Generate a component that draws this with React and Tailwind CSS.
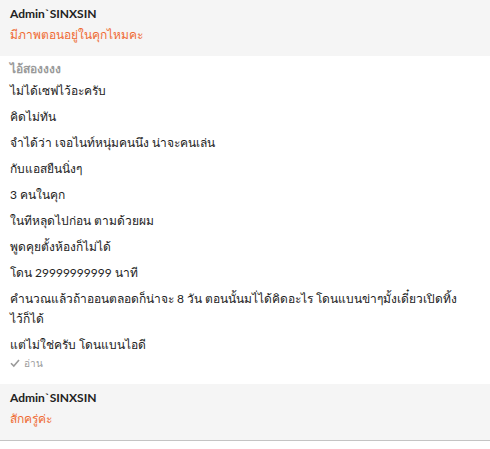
import React from "react";

const lines = [
  "ไม่ได้เซฟไว้อะครับ",
  "คิดไม่ทัน",
  "จำได้ว่า เจอไนท์หนุ่มคนนึง น่าจะคนเล่น",
  "กับแอสยืนนิ่งๆ",
  "3 คนในคุก",
  "ในทีหลุดไปก่อน ตามด้วยผม",
  "พูดคุยตั้งห้องก็ไม่ได้",
  "โดน 29999999999 นาที",
  "คำนวณแล้วถ้าออนตลอดก็น่าจะ 8 วัน ตอนนั้นมไ่ได้คิดอะไร โดนแบนข่าๆมั้งเดี๋ยวเปิดทิ้งไว้ก็ได้",
  "แต่ไม่ใช่ครับ โดนแบนไอดี",
];

export default function App() {
  return (
    <div className="w-[490px] h-[449px] bg-white text-[#222] [font-family:Lato,'Noto_Sans',sans-serif]">
      <div className="h-[56px] bg-[#f5f5f5] px-[10px] pt-[6px]">
        <div className="text-[12px] font-bold leading-[16px]">Admin`SINXSIN</div>
        <div className="text-[12px] leading-[26px] text-[#ef6a33]">มีภาพตอนอยู่ในคุกไหมคะ</div>
      </div>
      <div className="px-[10px] pt-[3px] h-[328px]">
        <div className="text-[12px] font-bold text-[#9a9a9a] leading-[20px]">ไอ้สองงงง</div>
        <div className="flex flex-col gap-[6px] text-[12px] leading-[20px] mt-[2px]">
          {lines.map((l, i) => (
            <div key={i} className="pr-[20px]">{l}</div>
          ))}
        </div>
        <div className="flex items-center gap-[4px] text-[10px] text-[#9a9a9a] mt-[1px] leading-[14px]">
          <svg width="10" height="10" viewBox="0 0 10 10" fill="none" stroke="#9a9a9a" strokeWidth="1.6">
            <path d="M1 5.2 L3.8 8 L9 2" />
          </svg>
          <span>อ่าน</span>
        </div>
      </div>
      <div className="h-[57px] bg-[#f5f5f5] px-[10px] pt-[6px] border-b border-[#c4c4c4]">
        <div className="text-[12px] font-bold leading-[16px]">Admin`SINXSIN</div>
        <div className="text-[12px] leading-[26px] text-[#ef6a33]">สักครู่ค่ะ</div>
      </div>
    </div>
  );
}
